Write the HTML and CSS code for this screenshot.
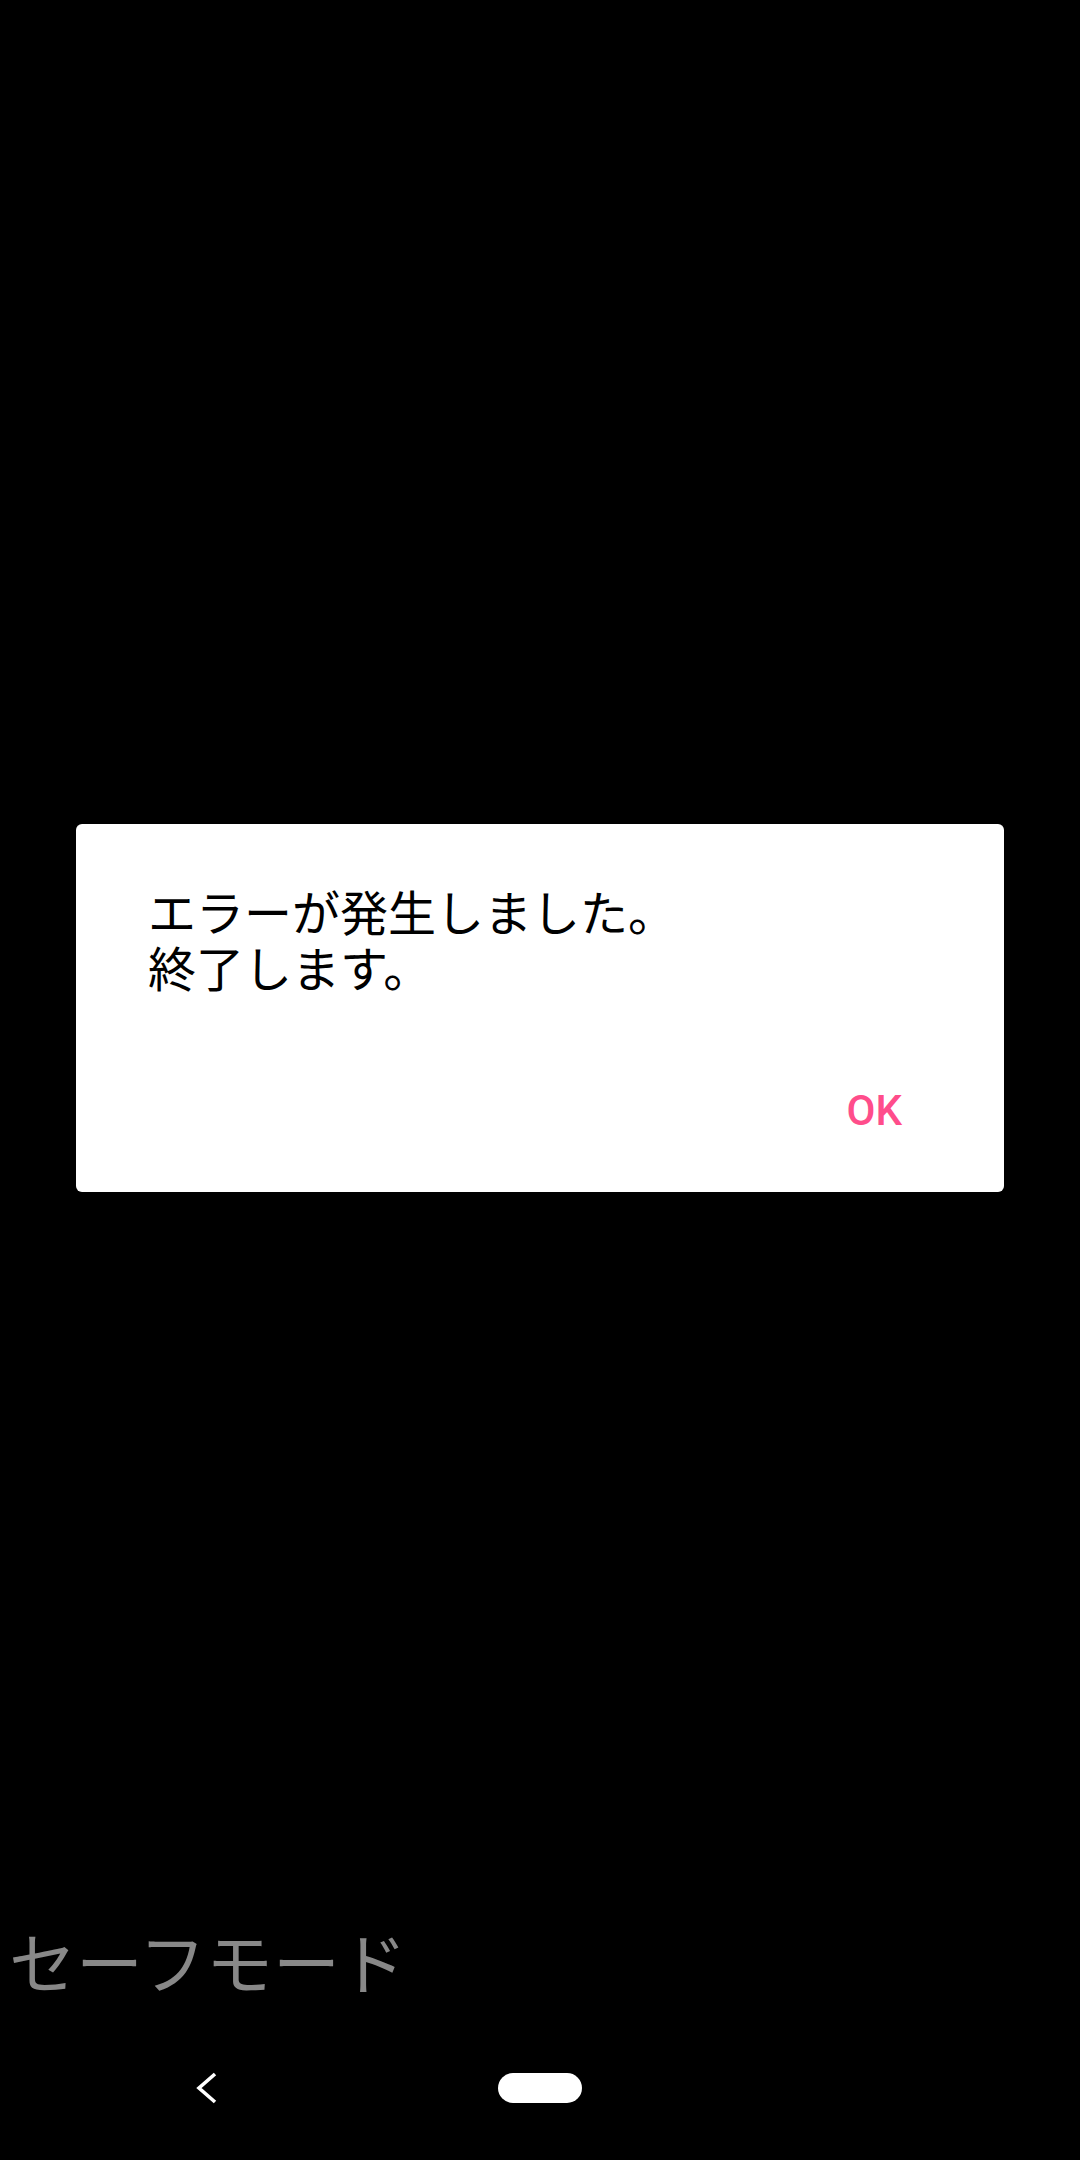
FILE: index.html
```html
<!DOCTYPE html>
<html lang="ja">
<head>
<meta charset="utf-8">
<title>エラー</title>
<link rel="stylesheet" href="styles.css">
</head>
<body>
<div class="screen">
  <div class="stage">
    <div class="dialog">
      <p class="message">エラーが発生しました。<br>終了します。</p>
      <div class="actions">
        <span class="ok">OK</span>
      </div>
    </div>
  </div>
  <div class="safe-mode">セーフモード</div>
  <nav class="navbar">
    <svg class="back" width="22" height="32" viewBox="0 0 22 32">
      <polyline points="19,2 3,16 19,30" fill="none" stroke="#fff" stroke-width="3.6" stroke-linecap="butt" stroke-linejoin="miter"/>
    </svg>
    <span class="home"></span>
  </nav>
</div>
</body>
</html>
```

FILE: styles.css
```css
html, body {
  margin: 0;
  padding: 0;
  background: #000;
}

.screen {
  width: 1080px;
  height: 2160px;
  display: flex;
  flex-direction: column;
  background: #000;
  overflow: hidden;
}

.stage {
  flex: 1;
  padding-top: 824px;
  display: flex;
  flex-direction: column;
  align-items: center;
}

.dialog {
  width: 928px;
  box-sizing: border-box;
  background: #fff;
  border-radius: 6px;
  padding: 58px 0 57px 72px;
}

.message {
  margin: 0;
  font-family: "Noto Sans CJK JP", sans-serif;
  font-size: 48px;
  line-height: 56px;
  color: #000;
}

.actions {
  display: flex;
  justify-content: flex-end;
  margin-top: 92px;
  padding-right: 102px;
}

.ok {
  font-family: Roboto, "Liberation Sans", sans-serif;
  font-weight: 500;
  font-size: 42px;
  line-height: 49px;
  color: #ff4d8b;
}

.safe-mode {
  font-family: "Noto Sans CJK JP", sans-serif;
  font-size: 67px;
  line-height: 66px;
  color: #888;
  padding-left: 9px;
  margin-bottom: 23px;
}

.navbar {
  height: 144px;
  display: flex;
  align-items: center;
  padding-left: 196px;
  gap: 280px;
}

.back {
  display: block;
}

.home {
  display: block;
  width: 84px;
  height: 30px;
  border-radius: 15px;
  background: #fff;
}
```
